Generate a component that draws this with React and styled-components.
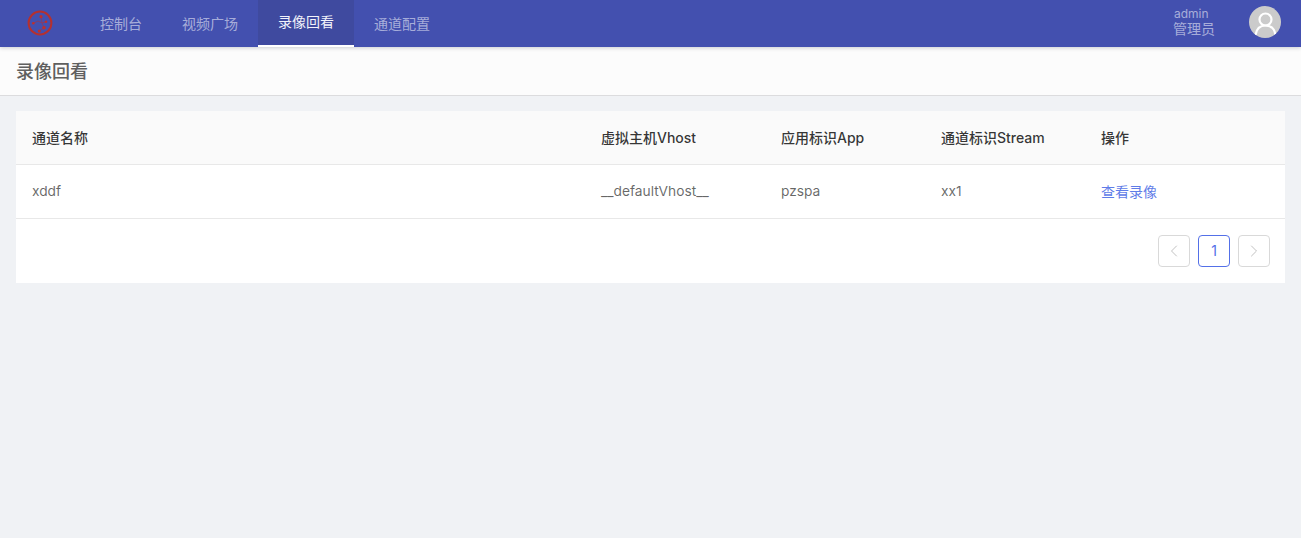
import React from 'react';
import styled, { createGlobalStyle } from 'styled-components';
import { ChevronLeft, ChevronRight } from 'lucide-react';

const GlobalStyle = createGlobalStyle`
  html, body {
    margin: 0;
    padding: 0;
    background: #f0f2f5;
    font-family: Inter, "Noto Sans CJK SC", sans-serif;
    font-size: 14px;
  }
  * {
    box-sizing: border-box;
  }
`;

const Page = styled.div`
  min-height: 538px;
  background: #f0f2f5;
`;

const TopBar = styled.header`
  display: flex;
  align-items: stretch;
  justify-content: space-between;
  height: 47px;
  background: #4350af;
  box-shadow: 0 1px 4px rgba(0, 21, 41, 0.2);
  position: relative;
`;

const LeftGroup = styled.div`
  display: flex;
  align-items: stretch;
`;

const LogoBox = styled.div`
  display: flex;
  align-items: center;
  justify-content: center;
  width: 80px;
  padding-bottom: 2px;
`;

const NavItem = styled.a`
  display: flex;
  align-items: center;
  padding: ${(p) => (p.$active ? '0 20px 3px' : '0 20px 2px')};
  font-size: 14px;
  color: ${(p) => (p.$active ? '#f2f3fa' : 'rgba(255, 255, 255, 0.55)')};
  background: ${(p) => (p.$active ? '#3f4a9f' : 'transparent')};
  border-bottom: ${(p) => (p.$active ? '2px solid #fff' : 'none')};
`;

const UserBox = styled.div`
  display: flex;
  align-items: center;
  gap: 34px;
  padding: 0 20px 3px 0;
`;

const UserText = styled.div`
  display: flex;
  flex-direction: column;
  color: rgba(255, 255, 255, 0.55);
`;

const UserName = styled.span`
  font-size: 12px;
  line-height: 14px;
  padding-left: 1px;
`;

const UserRole = styled.span`
  font-size: 14px;
  line-height: 16px;
`;

const Avatar = styled.div`
  width: 32px;
  height: 32px;
  border-radius: 50%;
  overflow: hidden;
  background: #cbcbcb;
`;

const PageHeader = styled.div`
  display: flex;
  align-items: center;
  height: 49px;
  padding: 0 16px 3px;
  background: #fcfcfc;
  border-bottom: 1px solid #dcdcde;
  font-size: 18px;
  font-weight: 500;
  color: #5f5f5f;
`;

const Content = styled.main`
  padding: 15px 16px 16px;
`;

const Card = styled.section`
  background: #fff;
`;

const Table = styled.table`
  width: 100%;
  border-collapse: collapse;
  table-layout: fixed;
`;

const HeadCell = styled.th`
  width: ${(p) => p.$width || 'auto'};
  height: 53px;
  padding: 0 16px;
  background: #fafafa;
  border-bottom: 1px solid #e8e8e8;
  text-align: left;
  font-size: 14px;
  font-weight: 500;
  color: rgba(0, 0, 0, 0.8);
`;

const Cell = styled.td`
  height: 54px;
  padding: 0 16px;
  border-bottom: 1px solid #e8e8e8;
  font-size: 13.75px;
  color: rgba(0, 0, 0, 0.6);
`;

const ActionLink = styled.a`
  font-size: 14px;
  color: #5f7ce8;
`;

const Pager = styled.div`
  display: flex;
  justify-content: flex-end;
  gap: 8px;
  padding: 16px 15px;
`;

const PageButton = styled.button`
  display: flex;
  align-items: center;
  justify-content: center;
  width: 32px;
  height: 32px;
  padding: 0;
  border: 1px solid ${(p) => (p.$active ? '#5470e8' : '#d9d9d9')};
  border-radius: 4px;
  background: #fff;
  font-family: inherit;
  font-size: 14px;
  color: ${(p) => (p.$active ? '#5470e8' : '#bbbbbb')};
`;

const Logo = () => (
  <svg width="26" height="26" viewBox="0 0 26 26" fill="none">
    <circle cx="13" cy="13" r="11.4" stroke="#b5302f" strokeWidth="2" />
    <g stroke="#8f3a5a" strokeWidth="0.8">
      <path d="M14 6.7 L15 13 L17 17.7 L12.3 21" />
      <path d="M6.3 13.3 L11 11 L15 13" />
      <path d="M15 13 L19 11.7" />
    </g>
    <g fill="#bd302e">
      <circle cx="14" cy="6.7" r="1.6" />
      <circle cx="6.3" cy="13.3" r="1.3" />
      <circle cx="19" cy="11.7" r="1.3" />
      <circle cx="17" cy="17.7" r="1.8" />
      <circle cx="12.3" cy="21" r="1.6" />
    </g>
  </svg>
);

const AvatarIcon = () => (
  <svg width="32" height="32" viewBox="0 0 32 32" fill="none" stroke="#fff" strokeWidth="2.2">
    <circle cx="16.5" cy="13.5" r="6" />
    <path d="M6.5 29c1-6.5 5-9.5 10-9.5s9 3 10 9.5" />
  </svg>
);

const App = () => {
  return (
    <Page>
      <GlobalStyle />
      <TopBar>
        <LeftGroup>
          <LogoBox>
            <Logo />
          </LogoBox>
          <NavItem>控制台</NavItem>
          <NavItem>视频广场</NavItem>
          <NavItem $active>录像回看</NavItem>
          <NavItem>通道配置</NavItem>
        </LeftGroup>
        <UserBox>
          <UserText>
            <UserName>admin</UserName>
            <UserRole>管理员</UserRole>
          </UserText>
          <Avatar>
            <AvatarIcon />
          </Avatar>
        </UserBox>
      </TopBar>
      <PageHeader>录像回看</PageHeader>
      <Content>
        <Card>
          <Table>
            <thead>
              <tr>
                <HeadCell>通道名称</HeadCell>
                <HeadCell $width="180px">虚拟主机Vhost</HeadCell>
                <HeadCell $width="160px">应用标识App</HeadCell>
                <HeadCell $width="160px">通道标识Stream</HeadCell>
                <HeadCell $width="200px">操作</HeadCell>
              </tr>
            </thead>
            <tbody>
              <tr>
                <Cell>xddf</Cell>
                <Cell>__defaultVhost__</Cell>
                <Cell>pzspa</Cell>
                <Cell>xx1</Cell>
                <Cell>
                  <ActionLink>查看录像</ActionLink>
                </Cell>
              </tr>
            </tbody>
          </Table>
          <Pager>
            <PageButton>
              <ChevronLeft size={20} strokeWidth={1.1} />
            </PageButton>
            <PageButton $active>1</PageButton>
            <PageButton>
              <ChevronRight size={20} strokeWidth={1.1} />
            </PageButton>
          </Pager>
        </Card>
      </Content>
    </Page>
  );
};

export default App;
